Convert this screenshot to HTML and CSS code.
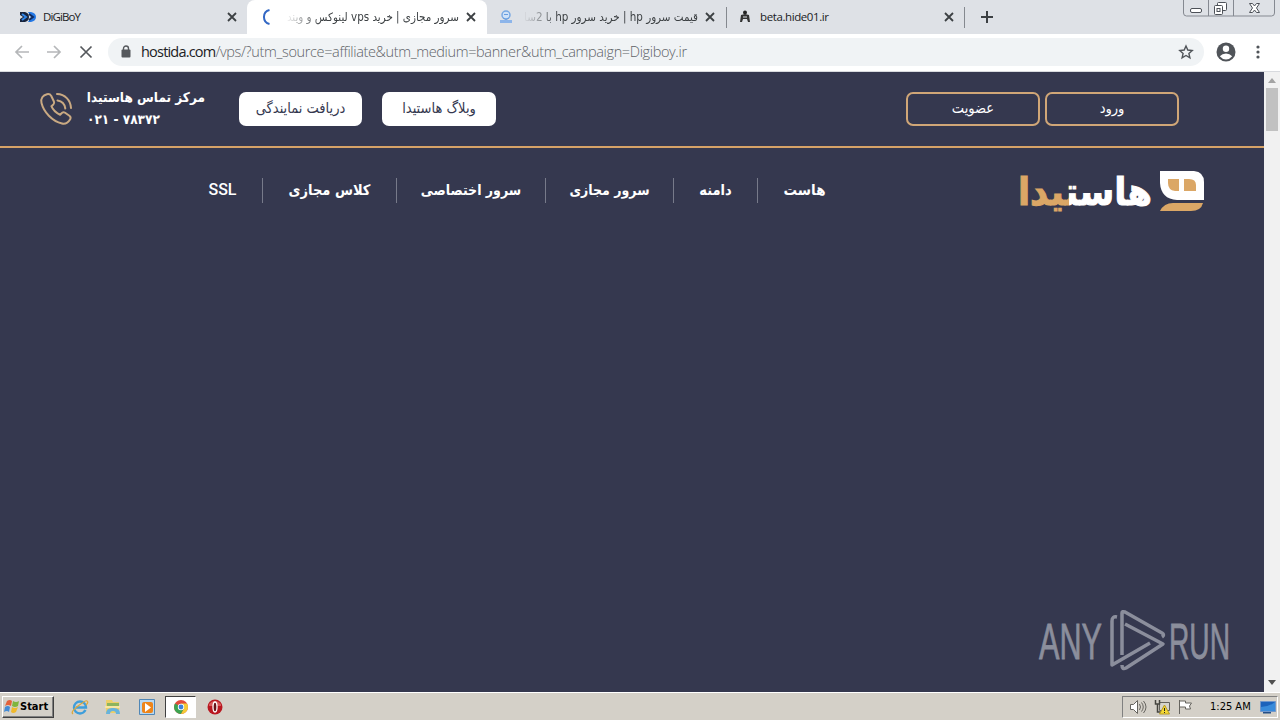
FILE: index.html
```html
<!DOCTYPE html>
<html lang="fa">
<head>
  <meta charset="UTF-8" />
  <title>سرور مجازی | خرید vps لینوکس و ویندوز</title>
  <link rel="stylesheet" href="styles.css">
</head>
<body>
  <div class="tabs">
    <div class="tab first">
      <svg class="favicon" width="16" height="14" viewBox="0 0 16 14"><path d="M0 2h5q4 1 4 5t-4 5H0V9l3-2-3-2z" fill="#17243d"/><path d="M8 2h3q5 1 5 5t-5 5H8l3-5z" fill="#2478e5"/><path d="M2 4l4 3-4 3" fill="none" stroke="#3185e8" stroke-width="2"/><path d="M9 4l4 3-4 3" fill="none" stroke="#112c60" stroke-width="2"/></svg>
      <span class="title digi">DiGiBoY</span>
      <svg class="close" viewBox="0 0 10 10"><path d="M1 1l8 8M9 1L1 9"/></svg>
    </div>
    <div class="tab active">
      <svg class="favicon" width="16" height="16" viewBox="0 0 16 16"><path d="M10.500 1A7.200 7.200 0 0 0 10.500 15" fill="none" stroke="#3267c4" stroke-width="2"/></svg>
      <span class="title rtl fade-white" dir="rtl">سرور مجازی | خرید vps لینوکس و ویند</span>
      <svg class="close" viewBox="0 0 10 10"><path d="M1 1l8 8M9 1L1 9"/></svg>
    </div>
    <div class="tab">
      <svg class="favicon" width="14" height="14" viewBox="0 0 14 14"><circle cx="7" cy="5" r="4" fill="#cfe2f8" stroke="#78a9e3" stroke-width="1.500"/><path d="M5 4.500h4M4 8l3 1.500L10 8" fill="none" stroke="#689de0"/><path d="M1 10h12v3H1z" fill="#8db5ea"/></svg>
      <span class="title rtl fade" dir="rtl">قیمت سرور hp | خرید سرور hp با 2سا</span>
      <svg class="close" viewBox="0 0 10 10"><path d="M1 1l8 8M9 1L1 9"/></svg>
    </div>
    <div class="tab last">
      <svg class="favicon" width="12" height="14" viewBox="0 0 12 14"><circle cx="6" cy="2.500" r="2" fill="#222"/><path d="M2 5l4-1 4 1 1 7H9L8 9H4l-1 3H1z" fill="#333"/><path d="M4 7h4" stroke="#dee1e6"/></svg>
      <span class="title beta">beta.hide01.ir</span>
      <svg class="close" viewBox="0 0 10 10"><path d="M1 1l8 8M9 1L1 9"/></svg>
    </div>
    <svg class="plus" width="12" height="12" viewBox="0 0 12 12"><path d="M6 0v12M0 6h12" stroke="#3c4043" stroke-width="2"/></svg>
    <div class="window-buttons">
      <svg width="92" height="17" viewBox="0 0 92 17" fill="none" stroke="#858991"><path d="M.5 0v13q0 3 3 3h85q3 0 3-3V0M25.500 0v16M50.500 0v16"/><g stroke="#4d5158"><rect x="7.500" y="8.500" width="11" height="4" rx="1.500" fill="#fff"/><rect x="34.500" y="2.500" width="9" height="8" rx="1" fill="#fff"/><rect x="31.500" y="5.500" width="8" height="9" rx="1" fill="#fff"/><rect x="34" y="8.500" width="3" height="3"/><path d="M66.500 3.500h3l2 2.500 2-2.500h3L73.500 8l3 4.500h-3l-2-2.500-2 2.500h-3l3-4.500z" fill="#fff"/></g></svg>
    </div>
  </div>
  <div class="toolbar">
    <div class="nav-icons">
      <svg width="14" height="14" viewBox="0 0 14 14"><path d="M14 7H1M7 1L1 7l6 6" stroke="#b5b7b9"/></svg>
      <svg width="14" height="14" viewBox="0 0 14 14"><path d="M0 7h13M7 1l6 6-6 6" stroke="#b5b7b9"/></svg>
      <svg width="14" height="14" viewBox="0 0 14 14"><path d="M1.500 1.500l11 11M12.500 1.500l-11 11" stroke="#55585c"/></svg>
    </div>
    <div class="omnibox">
      <svg width="10" height="13" viewBox="0 0 10 13"><rect x=".5" y="4.500" width="9" height="8" rx="1" fill="#55585c"/><path d="M2.500 5V3.500a2.500 2.500 0 0 1 5 0V5" fill="none" stroke="#55585c" stroke-width="1.400"/></svg>
      <span class="url"><b>hostida.com</b>/vps/?utm_source=affiliate&amp;utm_medium=banner&amp;utm_campaign=Digiboy.ir</span>
      <svg class="star" width="14" height="14" viewBox="0 0 14 14"><path d="M7 1l1.800 4 4.400.5-3.300 2.900 1 4.400L7 10.500l-3.900 2.300 1-4.400L.8 5.500 5.200 5z" fill="none" stroke="#505459" stroke-width="1.400"/></svg>
    </div>
    <svg class="profile" width="20" height="20" viewBox="0 0 20 20"><circle cx="10" cy="10" r="9.500" fill="#505459"/><circle cx="10" cy="6.700" r="3.200" fill="#fff"/><path d="M3.800 14.200q2.500-2.800 6.200-2.800t6.200 2.800Q13.500 17.500 10 17.500t-6.200-3.300z" fill="#fff"/></svg>
    <svg class="dots" width="4" height="14" viewBox="0 0 4 14" fill="#505459"><circle cx="2" cy="2" r="1.600"/><circle cx="2" cy="7" r="1.600"/><circle cx="2" cy="12" r="1.600"/></svg>
  </div>
  <div class="viewport">
    <main>
      <header class="top">
        <svg class="phone" width="34" height="34" viewBox="0 0 34 34" fill="none" stroke="#c9a982" stroke-width="2" stroke-linecap="round" stroke-linejoin="round"><path d="M8 2.200C4 3.200 1.300 6.500 2.500 11c2.200 9 10.500 18 20.500 20.500 3.500.8 6.500-1.500 8.200-4.300.8-1.500.4-2.500-.8-3.400l-4.300-3c-1.500-1-2.700-.6-3.800.7l-1.200 1.300c-4.500-2-7.200-5-8.700-8.600l2-1.700c1-.8 1-1.800.5-3L12.300 4C11.200 2.200 10 1.700 8 2.200z"/><path d="M18 2c8 .3 13.500 6 14 14M18.500 8.500c4.500.6 7.200 3.500 7.800 8"/></svg>
        <div class="contact" dir="rtl">
          <div class="line1">مرکز تماس هاستیدا</div>
          <div class="line2" dir="ltr">۰۲۱ - ۷۸۳۷۲</div>
        </div>
        <a class="btn agency">دریافت نمایندگی</a>
        <a class="btn blog">وبلاگ هاستیدا</a>
        <a class="btn outline signup">عضویت</a>
        <a class="btn outline login">ورود</a>
      </header>
      <div class="menu-row">
        <nav class="menu">
          <a class="ssl">SSL</a>
          <a class="class">کلاس مجازی</a>
          <a class="dedicated">سرور اختصاصی</a>
          <a class="virtual">سرور مجازی</a>
          <a class="domain">دامنه</a>
          <a class="host">هاست</a>
        </nav>
        <div class="logo">
          <svg class="wordmark" width="136" height="46" viewBox="0 0 136 46">
            <defs><linearGradient id="two" gradientUnits="userSpaceOnUse" x1="0" x2="136" y1="0" y2="0"><stop offset=".38" stop-color="#dba766"/><stop offset=".38" stop-color="#fff"/></linearGradient></defs>
            <text x="68" y="35" text-anchor="middle" textLength="134" lengthAdjust="spacingAndGlyphs" fill="url(#two)" stroke="url(#two)">هاستیدا</text>
          </svg>
          <svg width="46" height="42" viewBox="0 0 46 42"><path d="M1 0h34q10 1 10 11v18H18Q2 28 1 12z" fill="#fff"/><path d="M9 8h11v12h-4q-7-1-7-8zM25 8h5q7 0 7 6v6H25z" fill="#dba766"/><path d="M1 40Q5 32 14 32h30q-2 8-12 8z" fill="#dba766"/></svg>
        </div>
      </div>
      <div class="watermark">
        <svg width="194" height="64" viewBox="0 0 194 64">
          <text x="1" y="50" textLength="63" lengthAdjust="spacingAndGlyphs">ANY</text>
          <g fill="none" stroke="#8b8e9c" stroke-width="3.500" stroke-linejoin="round"><path d="M79 8q-5-1-5 4v44l38-22"/><path d="M84 46V4q0-2 3-1l37 21q3 2 0 4"/><path d="M87 15l38 20-37 24q-4 2-4-3"/></g>
          <text x="131" y="50" textLength="61" lengthAdjust="spacingAndGlyphs">RUN</text>
        </svg>
      </div>
    </main>
    <div class="scrollbar">
      <span class="up"></span>
      <span class="thumb"></span>
      <span class="down"></span>
    </div>
  </div>
  <footer class="taskbar">
    <div class="start">
      <svg width="16" height="15" viewBox="0 0 16 15"><path d="M3 2q3-2 5 0L7 7Q4 5 1 7z" fill="#e3623b"/><path d="M9 2q3 2 6 0l-1 5q-3 2-6 0z" fill="#7fb53f"/><path d="M1 8q3-2 5 0l-1 5q-2-2-5 0z" fill="#448bd5"/><path d="M8 8q3 2 6 0l-2 5q-3 2-5 0z" fill="#f0b92c"/></svg>
      <span>Start</span>
    </div>
    <svg class="ie" width="18" height="18" viewBox="0 0 18 18" fill="none"><path d="M14.500 12q-2 3.500-5.500 3.500a6 6 0 1 1 6-6H5" stroke="#3e9edb" stroke-width="2.400"/><path d="M2 16q-3-2 5-8t9-5q2 1-1 4" stroke="#dda83a" stroke-width="1.200"/></svg>
    <svg class="folder" width="18" height="18" viewBox="0 0 18 18"><path d="M2 2h6l1 2h6v11H2z" fill="#edcf68"/><path d="M3 5h12v3H3z" fill="#8db45e"/><path d="M1 8h15v2H1z" fill="#f7e6a3"/><path d="M2 16q0-6 6-6h2q6 0 6 6h-4q0-3-3-3t-3 3z" fill="#68b3dc"/></svg>
    <svg class="media" width="16" height="16" viewBox="0 0 16 16"><path d="M.5.5h15v15H.5z" fill="#b8d8f1" stroke="#5087b6"/><rect x="3" y="3" width="11" height="11" rx="2" fill="#ee8519"/><path d="M6 4l6 4.500L6 13z" fill="#fff"/></svg>
    <div class="running"><svg width="14" height="14" viewBox="0 0 14 14"><circle cx="7" cy="7" r="7" fill="#e24b3b"/><path d="M1 3.500A7 7 0 0 0 7 14l3-5.300z" fill="#3ca451"/><path d="M7 14A7 7 0 0 0 13 3.500H7l3 5z" fill="#f4cb36"/><circle cx="7" cy="7" r="3.200" fill="#fff"/><circle cx="7" cy="7" r="2.400" fill="#3c80db"/></svg></div>
    <svg class="opera" width="16" height="16" viewBox="0 0 16 16"><circle cx="8" cy="8" r="7.500" fill="#b91720"/><path d="M2 5q6-6 12 0v2H2z" fill="#d85a5a"/><ellipse cx="8" cy="8" rx="2" ry="5" fill="#671217" stroke="#fff" stroke-width="1.300"/></svg>
    <div class="tray">
      <svg width="18" height="16" viewBox="0 0 18 16" fill="none" stroke="#66645f"><path d="M1.500 5.500h3l4-4v13l-4-4h-3z" fill="#fff"/><path d="M10.500 5q2 3 0 6M12.500 3.500q3.500 4.500 0 9M14.500 2q5 6 0 12"/></svg>
      <svg width="16" height="16" viewBox="0 0 16 16"><path d="M5.500 3.500h10v8h-10z" fill="#d7d5cc" stroke="#65635d"/><path d="M1.500 1v4h4V1M3.500 5v8h5" fill="none" stroke="#45443f" stroke-width="1.500"/><path d="M10.500 6l5 9h-10z" fill="#f5d934" stroke="#b79a22"/><path d="M10.500 9v3m0 1v1" stroke="#222"/></svg>
      <svg width="17" height="16" viewBox="0 0 17 16"><path d="M2.500 1v14M2.500 2h6v2h6l-2 3 1 3h-5V8h-6z" fill="#fff" stroke="#66645f"/></svg>
      <span class="clock">1:25 AM</span>
      <svg class="desktop" width="16" height="14" viewBox="0 0 16 14"><path d="M.5 1.500h15v10H.5z" fill="#1c62bb" stroke="#7196ca"/><path d="M1 7q8 0 14-5v9H1z" fill="#398bda"/><path d="M3 12h8v1.500H3z" fill="#234f87"/></svg>
    </div>
  </footer>
</body>
</html>
```
FILE: styles.css
```css
* {
  box-sizing: border-box;
}
body {
  margin: 0;
  width: 1280px;
  height: 720px;
  overflow: hidden;
  display: flex;
  flex-direction: column;
  font-family: "DejaVu Sans Condensed", "DejaVu Sans", sans-serif;
}
svg {
  display: block;
  flex: none;
  overflow: visible;
}

/* tabs */
.tabs {
  height: 34px;
  flex: none;
  display: flex;
  background: #dee1e6;
}
.tab {
  width: 239px;
  display: flex;
  align-items: center;
  padding: 0 11px 0 12px;
  font-size: 11.5px;
  color: #3c4043;
}
.tab.first {
  width: 247px;
  padding: 0 10px 0 20px;
}
.tab.active {
  width: 240px;
  background: #fff;
  border-radius: 8px 8px 0 0;
}
.tab .title {
  flex: 1;
  margin-left: 7px;
  white-space: nowrap;
  overflow: hidden;
  line-height: 20px;
}
.tab .digi, .tab .beta {
  font-family: "Open Sans", sans-serif;
  font-size: 11.5px;
  letter-spacing: -0.9px;
  color: #202124;
}
.tab .beta {
  margin-left: 9px;
  letter-spacing: -0.4px;
}
.tab .rtl {
  margin: 0 7px 0 10px;
}
.fade, .fade-white {
  -webkit-mask-image: linear-gradient(to right, transparent, #000 36px);
}
.close {
  width: 10px;
  height: 10px;
  stroke: #3c4043;
  stroke-width: 1.8;
}
.tab.last {
  width: 239px;
  border-left: 1px solid #85898f;
  border-right: 1px solid #85898f;
  border-image: linear-gradient(transparent 8px, #85898f 8px, #85898f 27px, transparent 27px) 1;
  padding-right: 10px;
}
.plus {
  margin: 11px 0 0 16px;
}
.window-buttons {
  margin-left: auto;
  margin-right: 5px;
}

/* address bar */
.toolbar {
  height: 38px;
  flex: none;
  display: flex;
  align-items: center;
  padding: 0 20px 2px 15px;
  background: #fff;
  border-bottom: 1px solid #d8dade;
}
.nav-icons {
  display: flex;
  gap: 18px;
  width: 93px;
  fill: none;
  stroke-width: 1.7;
}
.omnibox {
  width: 1096px;
  height: 28px;
  border-radius: 14px;
  background: #f0f3f5;
  display: flex;
  align-items: center;
  padding: 0 11px 0 13px;
}
.url {
  margin-left: 10px;
  font: 300 14.5px "Open Sans", sans-serif;
  letter-spacing: -0.36px;
  color: #5f6368;
  white-space: nowrap;
}
.url b {
  font-weight: 400;
  letter-spacing: -0.8px;
  color: #202124;
}
.star {
  margin-left: auto;
}
.profile {
  margin-left: 12px;
}
.dots {
  margin-left: auto;
}

/* page */
.viewport {
  height: 620px;
  flex: none;
  display: flex;
}
main {
  width: 1264px;
  background: #35384f;
  color: #fff;
  display: flex;
  flex-direction: column;
}
.top {
  height: 76px;
  border-bottom: 2px solid #d6a267;
  display: flex;
  padding: 20px 85px 0 39px;
}
.contact {
  width: 118px;
  margin: -6px 34px 0 14px;
  font-weight: bold;
  font-size: 13.5px;
  line-height: 22px;
  white-space: nowrap;
}
.line2 {
  text-align: left;
}
.btn {
  height: 34px;
  border-radius: 7px;
  background: #fff;
  color: #35384f;
  font-size: 14.5px;
  line-height: 32px;
  text-align: center;
  white-space: nowrap;
}
.agency {
  width: 123px;
}
.blog {
  width: 114px;
  margin-left: 20px;
}
.outline {
  width: 134px;
  background: none;
  border: 2px solid #d0a677;
  color: #fff;
  line-height: 29px;
}
.signup {
  margin-left: auto;
}
.login {
  margin-left: 5px;
}
.menu-row {
  height: 84px;
  display: flex;
  justify-content: space-between;
  padding: 22px 59px 0 182px;
}
.menu {
  display: flex;
  padding-top: 8px;
}
.menu a {
  height: 25px;
  line-height: 25px;
  font-size: 14px;
  font-weight: bold;
  text-align: center;
  white-space: nowrap;
}
.menu a + a {
  border-left: 1px solid #777a8a;
}
.menu .ssl {
  width: 80px;
  padding-left: 1px;
  font: 500 16px/24px Roboto, sans-serif;
}
.menu .class {
  width: 134px;
  font-size: 14.5px;
}
.dedicated {
  width: 149px;
}
.virtual {
  width: 128px;
}
.menu .domain {
  width: 84px;
  font-size: 14.5px;
}
.menu .host {
  width: 94px;
  font-size: 15px;
}
.logo {
  display: flex;
  gap: 6px;
}
.logo svg:last-child {
  margin-top: 1px;
}
.wordmark text {
  font: bold 38px "DejaVu Sans", sans-serif;
  stroke-width: 1;
}
.watermark {
  margin: auto 32px 19px auto;
}
.watermark text {
  font: 50px "Liberation Sans", sans-serif;
  fill: #8b8e9c;
  stroke: #8b8e9c;
  stroke-width: 0.8;
}
.scrollbar {
  width: 16px;
  background: #f1f1f1;
  display: flex;
  flex-direction: column;
  align-items: center;
}
.up, .down {
  border: 4px solid transparent;
}
.up {
  border-top: 0;
  border-bottom: 5px solid #a3a3a3;
  margin-top: 6px;
}
.thumb {
  width: 12px;
  height: 43px;
  margin-top: 5px;
  background: #c1c1c1;
}
.down {
  margin: auto 0 7px;
  border-bottom: 0;
  border-top: 5px solid #505050;
}

/* taskbar */
.taskbar {
  height: 28px;
  background: #d4d0c8;
  border-top: 1px solid #fff;
  display: flex;
  align-items: center;
  padding-left: 2px;
}
.start {
  width: 52px;
  height: 22px;
  display: flex;
  align-items: center;
  padding-left: 1px;
  border: 1px solid;
  border-color: #fff #404040 #404040 #fff;
  box-shadow: inset -1px -1px #808080;
  font: bold 11px "DejaVu Sans Condensed", sans-serif;
  color: #000;
}
.ie {
  margin-left: 17px;
}
.folder {
  margin-left: 15px;
}
.media {
  margin-left: 17px;
}
.running {
  width: 31px;
  height: 22px;
  margin-left: 10px;
  display: flex;
  align-items: center;
  justify-content: center;
  background: #fff;
  border: 1px solid;
  border-color: #404040 #fff #fff #404040;
}
.opera {
  margin-left: 11px;
}
.tray {
  width: 156px;
  height: 22px;
  margin-left: auto;
  margin-right: 2px;
  display: flex;
  align-items: center;
  gap: 7px;
  padding-left: 6px;
  border: 1px solid;
  border-color: #808080 #fff #fff #808080;
}
.clock {
  margin-left: 9px;
  width: 43px;
  font: 11px "DejaVu Sans Condensed", sans-serif;
  color: #000;
  white-space: nowrap;
}
```
